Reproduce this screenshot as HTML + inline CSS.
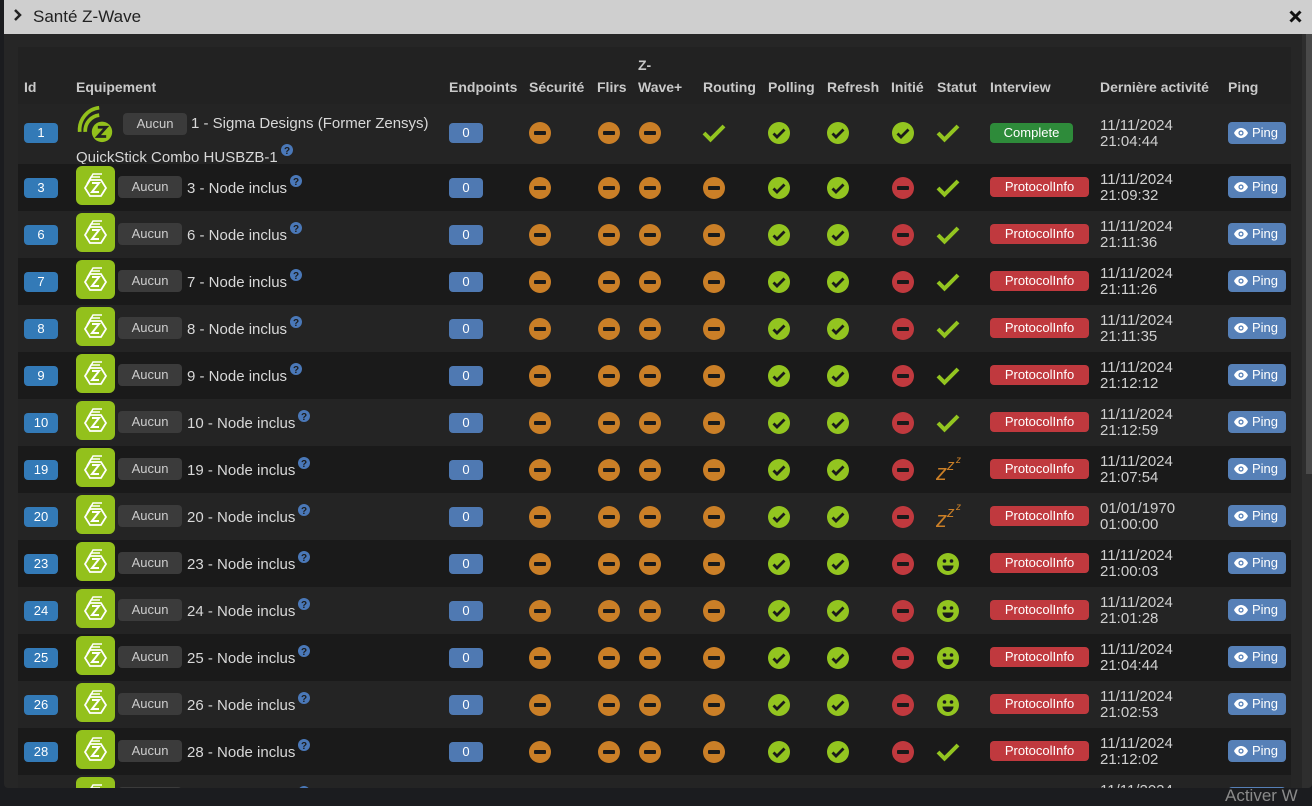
<!DOCTYPE html>
<html><head><meta charset="utf-8"><style>
*{margin:0;padding:0;box-sizing:border-box}
body{width:1312px;height:805px;background:#1b1c1f;font-family:"Liberation Sans",sans-serif;font-size:14px;color:#d6d6d6;position:relative;overflow:hidden}
#modal{position:absolute;left:4px;top:0;width:1308px;height:788px;background:#262626;border-radius:0 0 4px 4px;overflow:hidden}
#title{position:absolute;left:0;top:0;width:1308px;height:34px;background:#cfcfcf;color:#222;font-size:17px}
#title .t{position:absolute;left:29px;top:7px}
#title .chev{position:absolute;left:10px;top:9px}
#title .x{position:absolute;right:10px;top:10px}
#sb{position:absolute;left:1302px;top:34px;width:6px;height:440px;background:#4a4a4a}
#sbt{position:absolute;left:1298px;top:34px;width:10px;height:760px;background:#2e2e2e}
#hdr{position:absolute;left:14px;top:47px;width:1273px;height:57px;background:#222}
.h{position:absolute;font-weight:bold;color:#c9c9c9;top:32px}
.row{position:absolute;left:14px;width:1273px;height:47px}
.L{background:#242424}.D{background:#1a1a1a}
.row>*{position:absolute}
.id{left:6px;width:34px;height:20px;background:#337ab7;border-radius:4px;color:#fff;font-size:13px;text-align:center;line-height:20px;top:14px}
.ic{left:58px;top:2px;width:39px;height:39px}
.auc{left:100px;width:64px;height:22px;background:#3b3b3b;border-radius:4px;color:#ccc;font-size:13px;text-align:center;line-height:22px;top:12px}
.nm{left:169px;top:11px;font-size:15px;color:#d8d8d8;white-space:nowrap}
.q{vertical-align:6px;margin-left:3px}
.ep{left:431px;width:34px;height:20px;background:#4f79b2;border-radius:4px;color:#fff;font-size:13px;text-align:center;line-height:20px;top:14px}
.c{width:24px;height:24px;top:12px}
.iv{left:972px;width:99px;height:20px;background:#c0393e;border-radius:4px;color:#fff;font-size:13px;text-align:center;line-height:20px;top:13px}
.dt{left:1082px;top:8px;font-size:15px;line-height:16px;color:#cfcfcf}
.pg{left:1210px;width:58px;height:22px;background:#5680b7;border-radius:4px;color:#fff;font-size:13px;line-height:22px;top:12px;padding-left:24px}
.pg svg{position:absolute;left:6px;top:6px}
</style></head><body>
<svg width="0" height="0" style="position:absolute">
<defs>
<symbol id="mo" viewBox="0 0 24 24"><circle cx="12" cy="12" r="11" fill="#ca7f27"/><rect x="6" y="10" width="12" height="4" rx="1" fill="#1a1a1a"/></symbol>
<symbol id="mr" viewBox="0 0 24 24"><circle cx="12" cy="12" r="11" fill="#c0393e"/><rect x="6" y="10" width="12" height="4" rx="1" fill="#1a1a1a"/></symbol>
<symbol id="cg" viewBox="0 0 24 24"><circle cx="12" cy="12" r="11" fill="#93c520"/><path d="M6.5 12.5l3.5 3.5 7.5-7.5" fill="none" stroke="#1a1a1a" stroke-width="2.8"/></symbol>
<symbol id="ck" viewBox="0 0 24 24"><path d="M2 12l6.5 6.5L22 5" fill="none" stroke="#93c520" stroke-width="4"/></symbol>
<symbol id="sm" viewBox="0 0 24 24"><circle cx="12" cy="12" r="11" fill="#93c520"/><circle cx="8.5" cy="9" r="1.8" fill="#1a1a1a"/><circle cx="15.5" cy="9" r="1.8" fill="#1a1a1a"/><path d="M6.5 13.5h11a5.5 5.5 0 0 1-11 0z" fill="#1a1a1a"/></symbol>
<symbol id="zz" viewBox="0 0 28 26"><text x="0" y="25" font-family="Liberation Sans" font-style="italic" font-size="22" fill="#ca7f27">z</text><text x="11" y="15" font-family="Liberation Sans" font-style="italic" font-size="15" fill="#ca7f27">z</text><text x="20" y="8" font-family="Liberation Sans" font-style="italic" font-size="10" fill="#ca7f27">z</text></symbol>
<symbol id="nd" viewBox="0 0 39 39"><rect width="39" height="39" rx="6" fill="#93c11c"/><path d="M13 15l4-7h9" fill="none" stroke="#fff" stroke-width="1.5"/><path d="M11 18l4-7h9" fill="none" stroke="#fff" stroke-width="1.5"/><path d="M14 14h11l5 8-5 8H14l-5-8z" fill="none" stroke="#fff" stroke-width="1.8"/><path d="M16 17h7l-7 9h7" fill="none" stroke="#fff" stroke-width="2"/></symbol>
<symbol id="qq" viewBox="0 0 12 12"><circle cx="6" cy="6" r="6" fill="#4a78b8"/><text x="6" y="10" text-anchor="middle" font-family="Liberation Sans" font-weight="bold" font-size="10" fill="#1c1c1c">?</text></symbol>
<symbol id="eye" viewBox="0 0 14 10"><path d="M0 5C2 1 5 0 7 0s5 1 7 5c-2 4-5 5-7 5S2 9 0 5z" fill="#fff"/><circle cx="7" cy="5" r="2.6" fill="#5680b7"/><circle cx="7" cy="5" r="1.3" fill="#fff"/></symbol>
</defs></svg>
<div id="modal">
<div id="title"><svg class="chev" width="8" height="12" viewBox="0 0 8 12"><path d="M1 1l5 5-5 5" fill="none" stroke="#222" stroke-width="2.5"/></svg><span class="t">Santé Z-Wave</span><svg class="x" width="13" height="13" viewBox="0 0 13 13"><path d="M1.5 1.5l10 10M11.5 1.5l-10 10" stroke="#111" stroke-width="3"/></svg></div>
<div id="sbt"></div><div id="sb"></div>
<div id="hdr">
<span class="h" style="left:6px">Id</span><span class="h" style="left:58px">Equipement</span>
<span class="h" style="left:431px">Endpoints</span><span class="h" style="left:511px">Sécurité</span><span class="h" style="left:579px">Flirs</span>
<span class="h" style="left:620px;top:10px">Z-</span><span class="h" style="left:620px">Wave+</span>
<span class="h" style="left:685px">Routing</span><span class="h" style="left:750px">Polling</span><span class="h" style="left:809px">Refresh</span>
<span class="h" style="left:873px">Initié</span><span class="h" style="left:919px">Statut</span><span class="h" style="left:972px">Interview</span>
<span class="h" style="left:1082px">Dernière activité</span><span class="h" style="left:1210px">Ping</span>
</div>

<div class="row L" style="top:104px;height:60px">
<div class="id" style="top:19px">1</div>
<svg class="ic" style="top:0" width="42" height="42" viewBox="0 0 42 42"><path d="M4 30A24 24 0 0 1 25 4" fill="none" stroke="#93c11c" stroke-width="4"/><path d="M10 30A17 17 0 0 1 25 12" fill="none" stroke="#93c11c" stroke-width="4"/><circle cx="28" cy="30" r="11" fill="#93c11c"/><path d="M23.5 25h9l-9 10h9" fill="none" stroke="#222" stroke-width="3"/></svg>
<div class="auc" style="left:105px;top:9px">Aucun</div>
<div class="nm" style="left:173px;top:11px">1 - Sigma Designs (Former Zensys)</div>
<div class="nm" style="left:58px;top:40px">QuickStick Combo HUSBZB-1<svg class="q" width="12" height="12"><use href="#qq"/></svg></div>
<div class="ep" style="top:19px">0</div>
<svg class="c" style="left:510px;top:17px"><use href="#mo"/></svg><svg class="c" style="left:579px;top:17px"><use href="#mo"/></svg><svg class="c" style="left:620px;top:17px"><use href="#mo"/></svg>
<svg class="c" style="left:684px;top:17px"><use href="#ck"/></svg><svg class="c" style="left:749px;top:17px"><use href="#cg"/></svg><svg class="c" style="left:808px;top:17px"><use href="#cg"/></svg>
<svg class="c" style="left:873px;top:17px"><use href="#cg"/></svg><svg class="c" style="left:918px;top:17px"><use href="#ck"/></svg>
<div class="iv" style="background:#2e8b3a;width:83px;top:19px">Complete</div>
<div class="dt" style="top:14px">11/11/2024<br>21:04:44</div>
<div class="pg" style="top:18px"><svg width="14" height="10"><use href="#eye"/></svg>Ping</div>
</div>

<div class="row D" style="top:164px"><div class="id">3</div><svg class="ic"><use href="#nd"/></svg><div class="auc">Aucun</div><div class="nm">3 - Node inclus<svg class="q" width="12" height="12"><use href="#qq"/></svg></div><div class="ep">0</div><svg class="c" style="left:510px"><use href="#mo"/></svg><svg class="c" style="left:579px"><use href="#mo"/></svg><svg class="c" style="left:620px"><use href="#mo"/></svg><svg class="c" style="left:684px"><use href="#mo"/></svg><svg class="c" style="left:749px"><use href="#cg"/></svg><svg class="c" style="left:808px"><use href="#cg"/></svg><svg class="c" style="left:873px"><use href="#mr"/></svg><svg class="c" style="left:918px"><use href="#ck"/></svg><div class="iv">ProtocolInfo</div><div class="dt">11/11/2024<br>21:09:32</div><div class="pg"><svg width="14" height="10"><use href="#eye"/></svg>Ping</div></div>

<div class="row L" style="top:211px"><div class="id">6</div><svg class="ic"><use href="#nd"/></svg><div class="auc">Aucun</div><div class="nm">6 - Node inclus<svg class="q" width="12" height="12"><use href="#qq"/></svg></div><div class="ep">0</div><svg class="c" style="left:510px"><use href="#mo"/></svg><svg class="c" style="left:579px"><use href="#mo"/></svg><svg class="c" style="left:620px"><use href="#mo"/></svg><svg class="c" style="left:684px"><use href="#mo"/></svg><svg class="c" style="left:749px"><use href="#cg"/></svg><svg class="c" style="left:808px"><use href="#cg"/></svg><svg class="c" style="left:873px"><use href="#mr"/></svg><svg class="c" style="left:918px"><use href="#ck"/></svg><div class="iv">ProtocolInfo</div><div class="dt">11/11/2024<br>21:11:36</div><div class="pg"><svg width="14" height="10"><use href="#eye"/></svg>Ping</div></div>

<div class="row D" style="top:258px"><div class="id">7</div><svg class="ic"><use href="#nd"/></svg><div class="auc">Aucun</div><div class="nm">7 - Node inclus<svg class="q" width="12" height="12"><use href="#qq"/></svg></div><div class="ep">0</div><svg class="c" style="left:510px"><use href="#mo"/></svg><svg class="c" style="left:579px"><use href="#mo"/></svg><svg class="c" style="left:620px"><use href="#mo"/></svg><svg class="c" style="left:684px"><use href="#mo"/></svg><svg class="c" style="left:749px"><use href="#cg"/></svg><svg class="c" style="left:808px"><use href="#cg"/></svg><svg class="c" style="left:873px"><use href="#mr"/></svg><svg class="c" style="left:918px"><use href="#ck"/></svg><div class="iv">ProtocolInfo</div><div class="dt">11/11/2024<br>21:11:26</div><div class="pg"><svg width="14" height="10"><use href="#eye"/></svg>Ping</div></div>

<div class="row L" style="top:305px"><div class="id">8</div><svg class="ic"><use href="#nd"/></svg><div class="auc">Aucun</div><div class="nm">8 - Node inclus<svg class="q" width="12" height="12"><use href="#qq"/></svg></div><div class="ep">0</div><svg class="c" style="left:510px"><use href="#mo"/></svg><svg class="c" style="left:579px"><use href="#mo"/></svg><svg class="c" style="left:620px"><use href="#mo"/></svg><svg class="c" style="left:684px"><use href="#mo"/></svg><svg class="c" style="left:749px"><use href="#cg"/></svg><svg class="c" style="left:808px"><use href="#cg"/></svg><svg class="c" style="left:873px"><use href="#mr"/></svg><svg class="c" style="left:918px"><use href="#ck"/></svg><div class="iv">ProtocolInfo</div><div class="dt">11/11/2024<br>21:11:35</div><div class="pg"><svg width="14" height="10"><use href="#eye"/></svg>Ping</div></div>

<div class="row D" style="top:352px"><div class="id">9</div><svg class="ic"><use href="#nd"/></svg><div class="auc">Aucun</div><div class="nm">9 - Node inclus<svg class="q" width="12" height="12"><use href="#qq"/></svg></div><div class="ep">0</div><svg class="c" style="left:510px"><use href="#mo"/></svg><svg class="c" style="left:579px"><use href="#mo"/></svg><svg class="c" style="left:620px"><use href="#mo"/></svg><svg class="c" style="left:684px"><use href="#mo"/></svg><svg class="c" style="left:749px"><use href="#cg"/></svg><svg class="c" style="left:808px"><use href="#cg"/></svg><svg class="c" style="left:873px"><use href="#mr"/></svg><svg class="c" style="left:918px"><use href="#ck"/></svg><div class="iv">ProtocolInfo</div><div class="dt">11/11/2024<br>21:12:12</div><div class="pg"><svg width="14" height="10"><use href="#eye"/></svg>Ping</div></div>

<div class="row L" style="top:399px"><div class="id">10</div><svg class="ic"><use href="#nd"/></svg><div class="auc">Aucun</div><div class="nm">10 - Node inclus<svg class="q" width="12" height="12"><use href="#qq"/></svg></div><div class="ep">0</div><svg class="c" style="left:510px"><use href="#mo"/></svg><svg class="c" style="left:579px"><use href="#mo"/></svg><svg class="c" style="left:620px"><use href="#mo"/></svg><svg class="c" style="left:684px"><use href="#mo"/></svg><svg class="c" style="left:749px"><use href="#cg"/></svg><svg class="c" style="left:808px"><use href="#cg"/></svg><svg class="c" style="left:873px"><use href="#mr"/></svg><svg class="c" style="left:918px"><use href="#ck"/></svg><div class="iv">ProtocolInfo</div><div class="dt">11/11/2024<br>21:12:59</div><div class="pg"><svg width="14" height="10"><use href="#eye"/></svg>Ping</div></div>

<div class="row D" style="top:446px"><div class="id">19</div><svg class="ic"><use href="#nd"/></svg><div class="auc">Aucun</div><div class="nm">19 - Node inclus<svg class="q" width="12" height="12"><use href="#qq"/></svg></div><div class="ep">0</div><svg class="c" style="left:510px"><use href="#mo"/></svg><svg class="c" style="left:579px"><use href="#mo"/></svg><svg class="c" style="left:620px"><use href="#mo"/></svg><svg class="c" style="left:684px"><use href="#mo"/></svg><svg class="c" style="left:749px"><use href="#cg"/></svg><svg class="c" style="left:808px"><use href="#cg"/></svg><svg class="c" style="left:873px"><use href="#mr"/></svg><svg class="c" style="left:918px;top:9px;width:28px;height:26px"><use href="#zz"/></svg><div class="iv">ProtocolInfo</div><div class="dt">11/11/2024<br>21:07:54</div><div class="pg"><svg width="14" height="10"><use href="#eye"/></svg>Ping</div></div>

<div class="row L" style="top:493px"><div class="id">20</div><svg class="ic"><use href="#nd"/></svg><div class="auc">Aucun</div><div class="nm">20 - Node inclus<svg class="q" width="12" height="12"><use href="#qq"/></svg></div><div class="ep">0</div><svg class="c" style="left:510px"><use href="#mo"/></svg><svg class="c" style="left:579px"><use href="#mo"/></svg><svg class="c" style="left:620px"><use href="#mo"/></svg><svg class="c" style="left:684px"><use href="#mo"/></svg><svg class="c" style="left:749px"><use href="#cg"/></svg><svg class="c" style="left:808px"><use href="#cg"/></svg><svg class="c" style="left:873px"><use href="#mr"/></svg><svg class="c" style="left:918px;top:9px;width:28px;height:26px"><use href="#zz"/></svg><div class="iv">ProtocolInfo</div><div class="dt">01/01/1970<br>01:00:00</div><div class="pg"><svg width="14" height="10"><use href="#eye"/></svg>Ping</div></div>

<div class="row D" style="top:540px"><div class="id">23</div><svg class="ic"><use href="#nd"/></svg><div class="auc">Aucun</div><div class="nm">23 - Node inclus<svg class="q" width="12" height="12"><use href="#qq"/></svg></div><div class="ep">0</div><svg class="c" style="left:510px"><use href="#mo"/></svg><svg class="c" style="left:579px"><use href="#mo"/></svg><svg class="c" style="left:620px"><use href="#mo"/></svg><svg class="c" style="left:684px"><use href="#mo"/></svg><svg class="c" style="left:749px"><use href="#cg"/></svg><svg class="c" style="left:808px"><use href="#cg"/></svg><svg class="c" style="left:873px"><use href="#mr"/></svg><svg class="c" style="left:918px"><use href="#sm"/></svg><div class="iv">ProtocolInfo</div><div class="dt">11/11/2024<br>21:00:03</div><div class="pg"><svg width="14" height="10"><use href="#eye"/></svg>Ping</div></div>

<div class="row L" style="top:587px"><div class="id">24</div><svg class="ic"><use href="#nd"/></svg><div class="auc">Aucun</div><div class="nm">24 - Node inclus<svg class="q" width="12" height="12"><use href="#qq"/></svg></div><div class="ep">0</div><svg class="c" style="left:510px"><use href="#mo"/></svg><svg class="c" style="left:579px"><use href="#mo"/></svg><svg class="c" style="left:620px"><use href="#mo"/></svg><svg class="c" style="left:684px"><use href="#mo"/></svg><svg class="c" style="left:749px"><use href="#cg"/></svg><svg class="c" style="left:808px"><use href="#cg"/></svg><svg class="c" style="left:873px"><use href="#mr"/></svg><svg class="c" style="left:918px"><use href="#sm"/></svg><div class="iv">ProtocolInfo</div><div class="dt">11/11/2024<br>21:01:28</div><div class="pg"><svg width="14" height="10"><use href="#eye"/></svg>Ping</div></div>

<div class="row D" style="top:634px"><div class="id">25</div><svg class="ic"><use href="#nd"/></svg><div class="auc">Aucun</div><div class="nm">25 - Node inclus<svg class="q" width="12" height="12"><use href="#qq"/></svg></div><div class="ep">0</div><svg class="c" style="left:510px"><use href="#mo"/></svg><svg class="c" style="left:579px"><use href="#mo"/></svg><svg class="c" style="left:620px"><use href="#mo"/></svg><svg class="c" style="left:684px"><use href="#mo"/></svg><svg class="c" style="left:749px"><use href="#cg"/></svg><svg class="c" style="left:808px"><use href="#cg"/></svg><svg class="c" style="left:873px"><use href="#mr"/></svg><svg class="c" style="left:918px"><use href="#sm"/></svg><div class="iv">ProtocolInfo</div><div class="dt">11/11/2024<br>21:04:44</div><div class="pg"><svg width="14" height="10"><use href="#eye"/></svg>Ping</div></div>

<div class="row L" style="top:681px"><div class="id">26</div><svg class="ic"><use href="#nd"/></svg><div class="auc">Aucun</div><div class="nm">26 - Node inclus<svg class="q" width="12" height="12"><use href="#qq"/></svg></div><div class="ep">0</div><svg class="c" style="left:510px"><use href="#mo"/></svg><svg class="c" style="left:579px"><use href="#mo"/></svg><svg class="c" style="left:620px"><use href="#mo"/></svg><svg class="c" style="left:684px"><use href="#mo"/></svg><svg class="c" style="left:749px"><use href="#cg"/></svg><svg class="c" style="left:808px"><use href="#cg"/></svg><svg class="c" style="left:873px"><use href="#mr"/></svg><svg class="c" style="left:918px"><use href="#sm"/></svg><div class="iv">ProtocolInfo</div><div class="dt">11/11/2024<br>21:02:53</div><div class="pg"><svg width="14" height="10"><use href="#eye"/></svg>Ping</div></div>

<div class="row D" style="top:728px"><div class="id">28</div><svg class="ic"><use href="#nd"/></svg><div class="auc">Aucun</div><div class="nm">28 - Node inclus<svg class="q" width="12" height="12"><use href="#qq"/></svg></div><div class="ep">0</div><svg class="c" style="left:510px"><use href="#mo"/></svg><svg class="c" style="left:579px"><use href="#mo"/></svg><svg class="c" style="left:620px"><use href="#mo"/></svg><svg class="c" style="left:684px"><use href="#mo"/></svg><svg class="c" style="left:749px"><use href="#cg"/></svg><svg class="c" style="left:808px"><use href="#cg"/></svg><svg class="c" style="left:873px"><use href="#mr"/></svg><svg class="c" style="left:918px"><use href="#ck"/></svg><div class="iv">ProtocolInfo</div><div class="dt">11/11/2024<br>21:12:02</div><div class="pg"><svg width="14" height="10"><use href="#eye"/></svg>Ping</div></div>

<div class="row L" style="top:775px"><div class="id">29</div><svg class="ic"><use href="#nd"/></svg><div class="auc">Aucun</div><div class="nm">29 - Node inclus<svg class="q" width="12" height="12"><use href="#qq"/></svg></div><div class="ep">0</div><svg class="c" style="left:510px"><use href="#mo"/></svg><svg class="c" style="left:579px"><use href="#mo"/></svg><svg class="c" style="left:620px"><use href="#mo"/></svg><svg class="c" style="left:684px"><use href="#mo"/></svg><svg class="c" style="left:749px"><use href="#cg"/></svg><svg class="c" style="left:808px"><use href="#cg"/></svg><svg class="c" style="left:873px"><use href="#mr"/></svg><div class="iv">ProtocolInfo</div><div class="dt">11/11/2024<br>21:12:02</div><div class="pg"><svg width="14" height="10"><use href="#eye"/></svg>Ping</div></div>
</div>
<div style="position:absolute;left:1225px;top:786px;font-size:17px;color:#8a8a8a">Activer W</div>
</body></html>
